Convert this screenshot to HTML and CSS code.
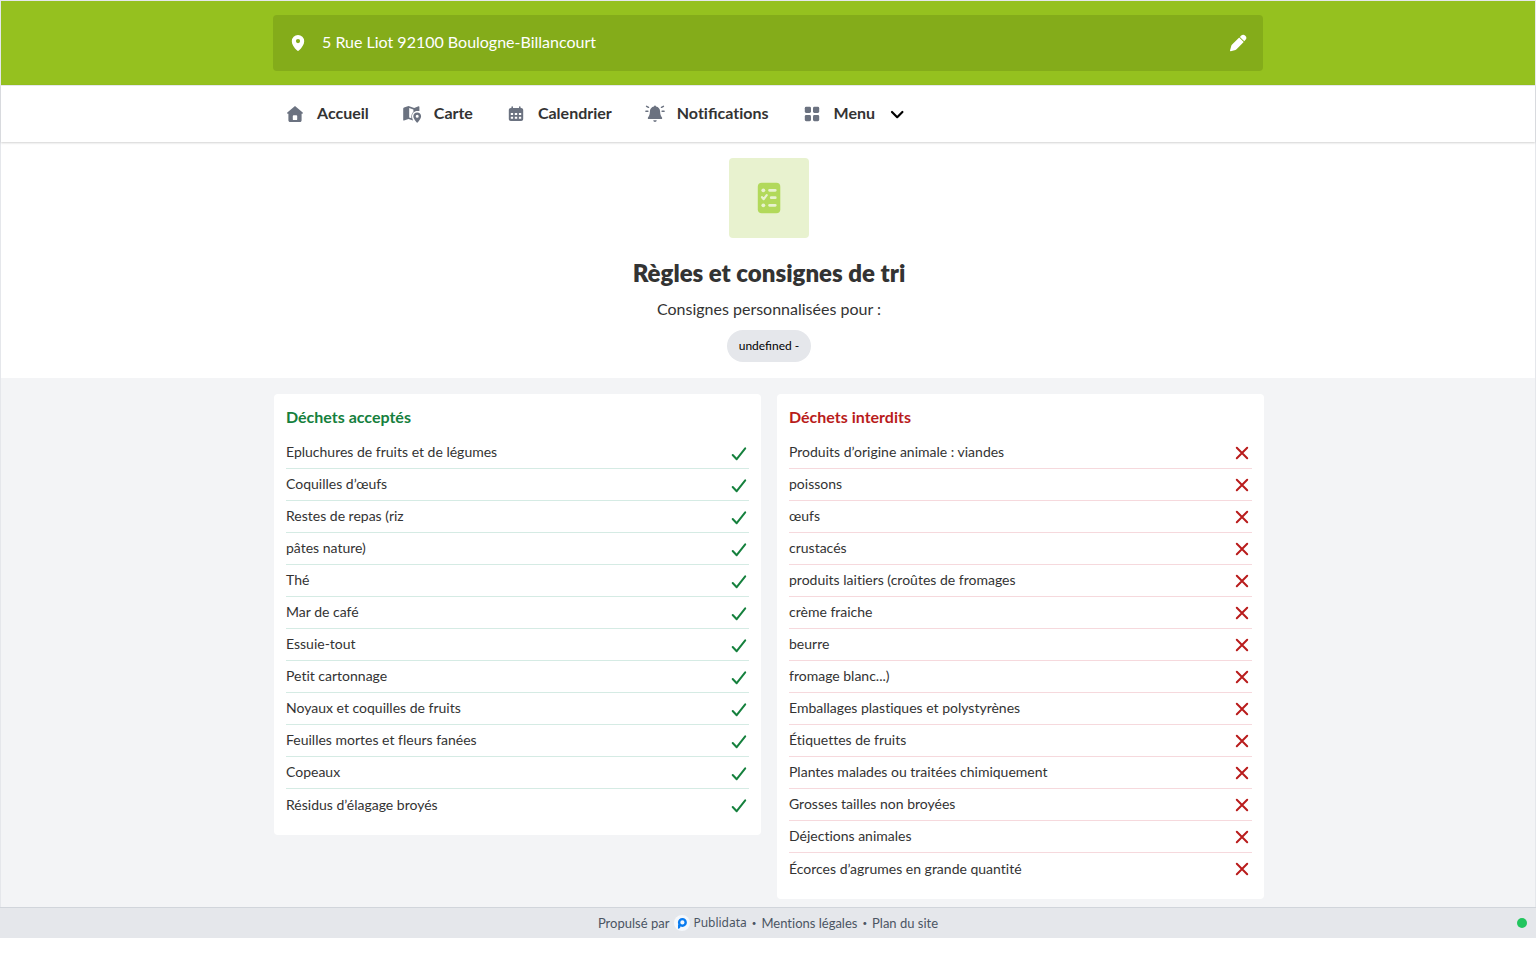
FILE: index.html
```html
<!DOCTYPE html>
<html lang="fr">
<head>
  <meta charset="UTF-8">
  <meta name="viewport" content="width=device-width, initial-scale=1">
  <title>Règles et consignes de tri</title>
  <link rel="stylesheet" href="styles.css">
</head>
<body>
  <!-- shared icons -->
  <svg class="sprite" aria-hidden="true">
    <symbol id="check" viewBox="0 0 20 20">
      <path d="M3.700 12l4 4.200L16.200 5.300" fill="none" stroke="currentColor" stroke-width="2" stroke-linecap="round" stroke-linejoin="round"/>
    </symbol>
    <symbol id="cross" viewBox="0 0 20 20">
      <path d="M4.800 4.800l10.400 10.400M15.200 4.800L4.800 15.200" fill="none" stroke="currentColor" stroke-width="2" stroke-linecap="round"/>
    </symbol>
  </svg>

  <div class="page">
    <header class="header">
      <div class="address container">
        <svg class="icon-lg" viewBox="0 0 24 24" fill="currentColor" aria-hidden="true">
          <path fill-rule="evenodd" d="M12 4a6.200 6.200 0 0 1 6.200 6.200c0 3.300-2.400 6.500-5.300 9.400a1.300 1.300 0 0 1-1.800 0c-2.900-2.900-5.300-6.100-5.300-9.400A6.200 6.200 0 0 1 12 4zm0 4a2.100 2.100 0 1 0 0 4.200A2.100 2.100 0 0 0 12 8z"/>
        </svg>
        <span class="address-text">5 Rue Liot 92100 Boulogne-Billancourt</span>
        <button type="button" class="edit" aria-label="Modifier l'adresse">
          <svg class="icon-lg" viewBox="0 0 24 24" fill="currentColor" aria-hidden="true">
            <path d="M13.200 6.600l4.500 4.500-6.900 7c-.4.400-.8.600-1.300.8l-4.700 1.300c-.5.100-.9-.3-.8-.8l1.300-4.700c.2-.5.400-.9.800-1.300zM19.300 4.700a3.100 3.100 0 0 1 0 4.400l-1 1.200-4.400-4.400 1.100-1.200a3.100 3.100 0 0 1 4.300 0z"/>
          </svg>
        </button>
      </div>
    </header>

    <nav class="nav">
      <div class="nav-list container">
        <a href="#">
          <svg class="icon" viewBox="0 0 20 20" fill="currentColor" aria-hidden="true">
            <path fill-rule="evenodd" d="M10 2l7.700 6.600c.5.500.2 1.100-.4 1.100H16.600v6.500c0 1-.7 1.800-1.700 1.800H5.200c-1 0-1.800-.8-1.800-1.800V9.700h-.7c-.6 0-.9-.6-.4-1.100zM8.600 11.200c-.5 0-.8.300-.8.800v3.200c0 .6.300.9.800.9h2.800c.5 0 .8-.3.800-.9V12c0-.5-.3-.8-.8-.8z"/>
          </svg>
          Accueil
        </a>
        <a href="#">
          <svg class="icon" viewBox="0 0 20 20" fill="currentColor" aria-hidden="true">
            <path fill-rule="evenodd" d="M1.200 4.700c0-.6.300-1 .8-1.200l4.500-1.600 5.700 2.100 4.400-1.700c.4-.2.800.1.800.6v4.200h-2.200c-3 0-5.200 2.400-5.200 5.400 0 1.400.4 2.700 1.100 3.900L6.500 14.900 2 16.500c-.4.200-.8-.1-.8-.6zM7.200 4v9.400l2.200.8c-.3-2.800.4-4.900 2-6.400V5.500z"/>
            <path fill-rule="evenodd" d="M15.200 8.400c2.200 0 3.900 1.700 3.900 3.900 0 1.900-1.700 4.300-3.200 5.900a.9.900 0 0 1-1.400 0c-1.500-1.600-3.200-4-3.200-5.900 0-2.200 1.700-3.900 3.900-3.900zm0 2.300a1.500 1.500 0 1 0 0 3 1.500 1.500 0 0 0 0-3z"/>
          </svg>
          Carte
        </a>
        <a href="#">
          <svg class="icon" viewBox="0 0 20 20" fill="currentColor" aria-hidden="true">
            <path fill-rule="evenodd" d="M6.200 2.200c.5 0 .8.300.8.800v1h6V3c0-.5.300-.8.800-.8s.8.300.8.800v1h.6c1.100 0 2 .9 2 2v9c0 1.100-.9 2-2 2H4.800c-1.100 0-2-.9-2-2V6c0-1.100.9-2 2-2h.6V3c0-.5.300-.8.800-.8zM4.800 9v2h2.300V9zm4 0v2h2.400V9zm4.100 0v2h2.300V9zm-8.100 3.700v2h2.300v-2zm4 0v2h2.400v-2zm4.100 0v2h2.300v-2z"/>
          </svg>
          Calendrier
        </a>
        <a href="#">
          <svg class="icon" viewBox="0 0 20 20" fill="currentColor" aria-hidden="true">
            <path d="M10 1.600c.6 0 .9.400 1 1 2.500.5 4 2.300 4.100 4.900.1 3.300.7 4.400 1.900 5.900.5.700.1 1.600-.7 1.600H3.700c-.8 0-1.200-.9-.7-1.600 1.200-1.500 1.800-2.600 1.900-5.900.1-2.600 1.600-4.400 4.100-4.900.1-.6.400-1 1-1zM8.300 16.200h3.400c0 1-.8 1.700-1.700 1.700s-1.700-.7-1.700-1.700z"/>
            <path d="M1.600 2.300l1.900 1M.9 7.200h2M18.400 2.300l-1.900 1M19.100 7.200h-2" fill="none" stroke="currentColor" stroke-width="1.500" stroke-linecap="round"/>
          </svg>
          <span>Noti<span class="liga">fi</span>cations</span>
        </a>
        <button type="button" class="menu">
          <svg class="icon" viewBox="0 0 20 20" fill="currentColor" aria-hidden="true">
            <rect x="2.800" y="2.800" width="6.200" height="6.200" rx="1.400"/>
            <rect x="11" y="2.800" width="6.200" height="6.200" rx="1.400"/>
            <rect x="2.800" y="11" width="6.200" height="6.200" rx="1.400"/>
            <rect x="11" y="11" width="6.200" height="6.200" rx="1.400"/>
          </svg>
          Menu
          <svg class="icon chevron" viewBox="0 0 20 20" aria-hidden="true">
            <path d="M5 8l5.200 5.200L15.400 8" fill="none" stroke="currentColor" stroke-width="2.200" stroke-linecap="round" stroke-linejoin="round"/>
          </svg>
        </button>
      </div>
    </nav>

    <main>
      <section class="hero">
        <div class="hero-icon">
          <svg viewBox="0 0 40 40" aria-hidden="true">
            <rect x="8.800" y="4.700" width="22.500" height="30.500" rx="4" fill="#b2d95b"/>
            <g fill="none" stroke="#e8f2cf" stroke-width="2.700" stroke-linecap="round" stroke-linejoin="round">
              <path d="M20.500 12.300h5.800M22.200 19.700h4.100M20.500 27.300h5.800"/>
              <path d="M13 19.200l1.700 2 3-4" stroke-width="2.200"/>
            </g>
            <circle cx="14.300" cy="12.300" r="1.900" fill="#e8f2cf"/>
            <circle cx="14.300" cy="27.300" r="1.900" fill="#e8f2cf"/>
          </svg>
        </div>
        <h1>Règles et consignes de tri</h1>
        <p>Consignes personnalisées pour :</p>
        <span class="pill liga">undefined -</span>
      </section>

      <section class="rules">
        <div class="cards container">
          <div class="card accepted">
            <h2>Déchets acceptés</h2>
            <ul>
              <li>Epluchures de fruits et de légumes <svg class="icon"><use href="#check"/></svg></li>
              <li>Coquilles d’œufs <svg class="icon"><use href="#check"/></svg></li>
              <li>Restes de repas (riz <svg class="icon"><use href="#check"/></svg></li>
              <li>pâtes nature) <svg class="icon"><use href="#check"/></svg></li>
              <li>Thé <svg class="icon"><use href="#check"/></svg></li>
              <li>Mar de café <svg class="icon"><use href="#check"/></svg></li>
              <li>Essuie-tout <svg class="icon"><use href="#check"/></svg></li>
              <li>Petit cartonnage <svg class="icon"><use href="#check"/></svg></li>
              <li>Noyaux et coquilles de fruits <svg class="icon"><use href="#check"/></svg></li>
              <li>Feuilles mortes et fleurs fanées <svg class="icon"><use href="#check"/></svg></li>
              <li>Copeaux <svg class="icon"><use href="#check"/></svg></li>
              <li>Résidus d’élagage broyés <svg class="icon"><use href="#check"/></svg></li>
            </ul>
          </div>

          <div class="card forbidden">
            <h2>Déchets interdits</h2>
            <ul>
              <li>Produits d’origine animale : viandes <svg class="icon"><use href="#cross"/></svg></li>
              <li>poissons <svg class="icon"><use href="#cross"/></svg></li>
              <li>œufs <svg class="icon"><use href="#cross"/></svg></li>
              <li>crustacés <svg class="icon"><use href="#cross"/></svg></li>
              <li>produits laitiers (croûtes de fromages <svg class="icon"><use href="#cross"/></svg></li>
              <li>crème fraiche <svg class="icon"><use href="#cross"/></svg></li>
              <li>beurre <svg class="icon"><use href="#cross"/></svg></li>
              <li>fromage blanc...) <svg class="icon"><use href="#cross"/></svg></li>
              <li>Emballages plastiques et polystyrènes <svg class="icon"><use href="#cross"/></svg></li>
              <li>Étiquettes de fruits <svg class="icon"><use href="#cross"/></svg></li>
              <li>Plantes malades ou traitées chimiquement <svg class="icon"><use href="#cross"/></svg></li>
              <li>Grosses tailles non broyées <svg class="icon"><use href="#cross"/></svg></li>
              <li>Déjections animales <svg class="icon"><use href="#cross"/></svg></li>
              <li>Écorces d’agrumes en grande quantité <svg class="icon"><use href="#cross"/></svg></li>
            </ul>
          </div>
        </div>
      </section>
    </main>
  </div>

  <footer class="footer">
    <span>Propulsé par</span>
    <a href="#" class="brand">
      <svg viewBox="0 0 16 16" aria-hidden="true">
        <circle cx="8" cy="8" r="8" fill="#f5f8fc"/>
        <circle cx="8.400" cy="7.400" r="3.300" fill="none" stroke="#0a7cf0" stroke-width="2.400"/>
        <path d="M4 9.200v4.600c1.600 0 2.500-1 2.500-2.500v-1.200z" fill="#0a7cf0"/>
      </svg>
      Publidata
    </a>
    <span class="sep">•</span>
    <a href="#">Mentions légales</a>
    <span class="sep">•</span>
    <a href="#">Plan du site</a>
    <span class="status"></span>
  </footer>
</body>
</html>
```
FILE: styles.css
```css
* {
  box-sizing: border-box;
}

body {
  margin: 0;
  font-family: Lato, sans-serif;
  font-size: 16px;
  line-height: 24px;
  font-variant-ligatures: none;
  color: #333;
  background: #fff;
}

h1, h2, p, ul {
  margin: 0;
  padding: 0;
}

a {
  color: inherit;
  text-decoration: none;
}

button {
  font: inherit;
  font-variant-ligatures: none;
  color: inherit;
  background: none;
  border: none;
  padding: 0;
  cursor: pointer;
}

svg {
  display: block;
  flex-shrink: 0;
}

.sprite {
  position: absolute;
  width: 0;
  height: 0;
}

.icon {
  width: 20px;
  height: 24px;
}

.icon-lg {
  width: 24px;
  height: 24px;
}

.liga {
  font-variant-ligatures: normal;
}

.container {
  max-width: 990px;
  margin: 0 auto;
}

.page {
  border: 1px solid #e5e7eb;
  border-bottom: none;
}

/* header */
.header {
  background: #95c11f;
  padding: 14px;
}

.address {
  display: flex;
  align-items: flex-start;
  gap: 12px;
  padding: 16px 13px;
  border-radius: 4px;
  background: #84ac1a;
  color: #fff;
}

.address-text {
  flex: 1;
  line-height: 22px;
}

/* navigation */
.nav {
  position: relative;
  border-top: 1px solid #e5e7eb;
  background: #fff;
  box-shadow: 0 1px 2px rgba(0, 0, 0, 0.18);
}

.nav-list {
  display: flex;
  gap: 33px;
  padding: 16px 12px;
  font-weight: bold;
}

.nav-list a,
.menu {
  display: flex;
  align-items: flex-start;
  gap: 12px;
  line-height: 22px;
}

.nav .icon {
  color: #6b7280;
}

.nav .chevron {
  color: #000;
}

/* title */
.hero {
  display: flex;
  flex-direction: column;
  align-items: center;
  padding: 16px 0 16px 2px;
  text-align: center;
}

.hero-icon {
  display: flex;
  padding: 20px;
  border-radius: 4px;
  background: #e8f2cf;
}

.hero-icon svg {
  width: 40px;
  height: 40px;
}

h1 {
  margin-top: 20px;
  font-size: 24px;
  line-height: 30px;
  font-weight: 800;
}

.hero p {
  margin: 10px 0;
  line-height: 22px;
}

.pill {
  padding: 4px 12px;
  border-radius: 16px;
  background: #e5e7eb;
  color: #000;
  font-size: 12px;
}

/* sorting rules */
.rules {
  padding: 16px 0 8px 2px;
  background: #f3f4f6;
}

.cards {
  display: grid;
  grid-template-columns: 1fr 1fr;
  align-items: start;
  gap: 16px;
}

.card {
  padding: 12px 12px 14px;
  border-radius: 4px;
  background: #fff;
}

.card h2 {
  margin-bottom: 9px;
  font-size: 16px;
  line-height: 22px;
}

.card ul {
  list-style: none;
  font-size: 14px;
  line-height: 30px;
}

.card li {
  display: flex;
  align-items: flex-start;
  justify-content: space-between;
  height: 32px;
  border-bottom: 1px solid;
}

.card li:last-child {
  border-bottom: none;
  line-height: 32px;
}

.card .icon {
  height: 32px;
}

.accepted h2,
.accepted .icon {
  color: #15803d;
}

.accepted li {
  border-color: #d5ebe4;
}

.forbidden h2,
.forbidden .icon {
  color: #b91c1c;
}

.forbidden li {
  border-color: #f6d9dd;
}

/* footer */
.footer {
  position: relative;
  display: flex;
  align-items: center;
  justify-content: center;
  gap: 5px;
  height: 31px;
  border-top: 1px solid #d1d5db;
  background: #e5e7eb;
  color: #4b5563;
  font-size: 13px;
}

.brand {
  display: flex;
  align-items: center;
  gap: 3px;
  font-family: "Noto Sans", sans-serif;
  font-size: 12px;
}

.brand svg {
  width: 16px;
  height: 16px;
}

.sep {
  font-size: 8px;
}

.status {
  position: absolute;
  right: 9px;
  width: 10px;
  height: 10px;
  border-radius: 50%;
  background: #22c55e;
}
```
